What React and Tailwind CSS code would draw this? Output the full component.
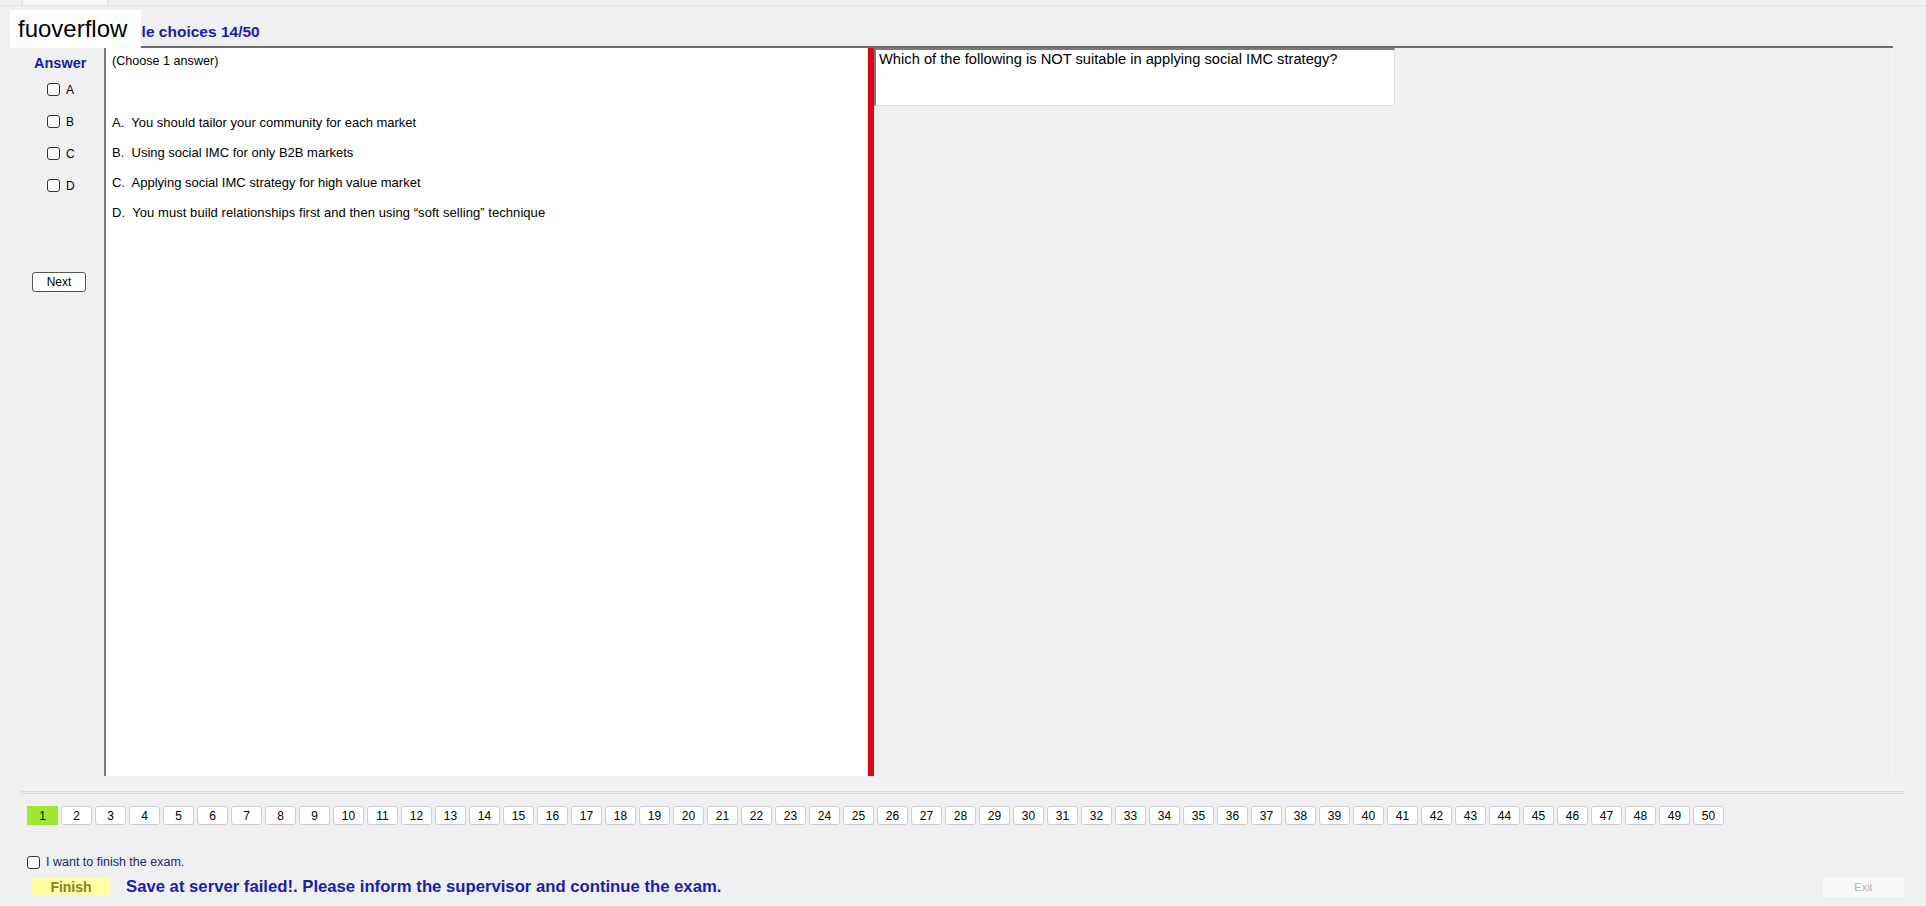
import React from "react";

const options = [
  "A.  You should tailor your community for each market",
  "B.  Using social IMC for only B2B markets",
  "C.  Applying social IMC strategy for high value market",
  "D.  You must build relationships first and then using \u201csoft selling\u201d technique",
];

const nums = Array.from({ length: 50 }, (_, i) => i + 1);

function Box({ className = "" }) {
  return (
    <span
      className={`inline-block w-[13px] h-[13px] rounded-[3px] border border-[#333] bg-white ${className}`}
    />
  );
}

export default function App() {
  return (
    <div
      className="relative w-[1926px] h-[906px] bg-[#f0f0f2] overflow-hidden text-black"
      style={{ fontFamily: '"Liberation Sans", Arial, sans-serif' }}
    >
      {/* top tab strip */}
      <div className="flex h-[6px] border-b border-[#e2e2e4]">
        <div className="ml-[22px] w-[86px] bg-[#f8f8f8] border-x border-[#dcdcdc]" />
      </div>

      {/* watermark */}
      <div className="absolute left-[10px] top-[10px] w-[131px] h-[38px] bg-white flex items-center pl-[8px] z-10">
        <span className="text-[24px] leading-none">fuoverflow</span>
      </div>

      <div className="ml-[21px] mr-[21px] border-b border-[#dadade]">
        {/* header */}
        <div className="h-[40px] flex items-end pb-[3px] pl-[75px]">
          <span className="text-[15.5px] font-bold text-[#1c1ca4]">Multiple choices 14/50</span>
        </div>

        {/* body */}
        <div className="flex h-[746px] pb-[15px] border-b border-[#dadade]">
          {/* answer column */}
          <div className="w-[83px] flex flex-col pt-[9px]">
            <div className="pl-[13px] text-[14.5px] font-bold text-[#1c1ca4] leading-[16px]">Answer</div>
            <div className="flex flex-col gap-[19px] mt-[12px] pl-[26px]">
              {["A", "B", "C", "D"].map((l) => (
                <label key={l} className="flex items-center gap-[6px] h-[13px] text-[12px]">
                  <Box />
                  <span>{l}</span>
                </label>
              ))}
            </div>
            <button className="mt-[80px] ml-[11px] w-[54px] h-[20px] rounded-[3px] border border-[#555] bg-white text-[12px] leading-none">
              Next
            </button>
          </div>

          {/* content */}
          <div className="flex-1 flex border-t-2 border-[#6b6b6b] mr-[12px]">
            <div className="w-[764px] bg-white border-l-2 border-[#7a7a7a] border-r border-r-[#e4e4e4] pl-[6px] pt-[5px] whitespace-pre">
              <div className="text-[12.6px] leading-[16px]">(Choose 1 answer)</div>
              <div className="flex flex-col gap-[14px] mt-[46px] text-[13px]">
                {options.map((o, i) => (
                  <div key={o} className={`leading-[16px] ${i === 3 ? "tracking-[0.06px]" : ""}`}>
                    {o}
                  </div>
                ))}
              </div>
            </div>
            <div className="w-[6px] bg-[#e00018]" />
            <div className="flex-1 flex items-start border-r border-[#fafafa]">
              <div className="w-[521px] h-[58px] bg-white border-l-2 border-t-2 border-[#7a7a7a] border-r border-b border-r-[#e0e0e0] border-b-[#e0e0e0] pl-[3px] pt-[1px] text-[14.7px] leading-[16px]">
                Which of the following is NOT suitable in applying social IMC strategy?
              </div>
            </div>
          </div>
        </div>

        <div className="h-[1px]" />
      </div>

      {/* numbers */}
      <div className="flex gap-[3px] ml-[27px] mt-[12px]">
        {nums.map((n) =>
          n === 1 ? (
            <div key={n} className="w-[31px] h-[19px] flex items-center justify-center bg-[#9ee830] text-[12px]">
              {n}
            </div>
          ) : (
            <div
              key={n}
              className="w-[31px] h-[19px] flex items-center justify-center bg-white border border-[#cfcfd3] rounded-[3px] text-[12px]"
            >
              {n}
            </div>
          )
        )}
      </div>

      {/* finish */}
      <div className="flex items-center gap-[6px] h-[13px] ml-[27px] mt-[31px]">
        <Box />
        <span className="text-[12.5px] text-[#24246a]">I want to finish the exam.</span>
      </div>
      <div className="flex items-center mt-[8px] ml-[32px] pr-[22px]">
        <div className="w-[78px] h-[18px] bg-[#ffffa6] flex items-center justify-center text-[14px] font-bold text-[#84842a]">
          Finish
        </div>
        <span className="ml-[16px] text-[16.7px] font-bold text-[#1c1cae] leading-none">
          Save at server failed!. Please inform the supervisor and continue the exam.
        </span>
        <div className="ml-auto w-[81px] h-[20px] bg-[#f8f8fa] flex items-center justify-center text-[11px] text-[#b4b4b4]">
          Exit
        </div>
      </div>
    </div>
  );
}
